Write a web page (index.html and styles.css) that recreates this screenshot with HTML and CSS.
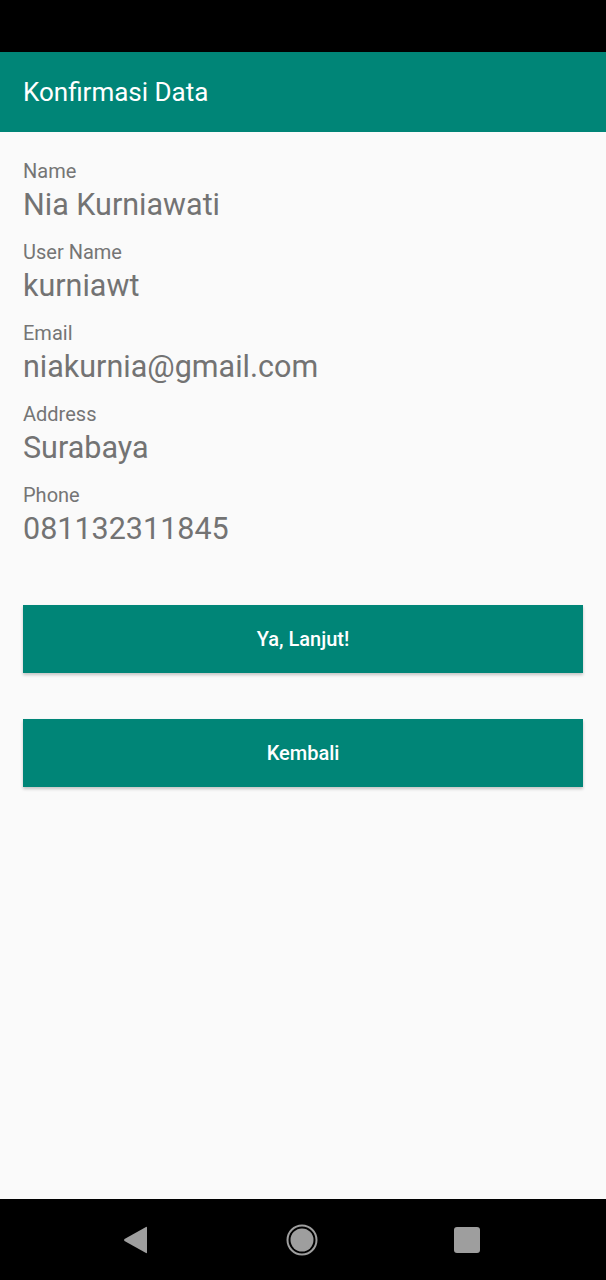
FILE: index.html
```html
<!DOCTYPE html>
<html>
<head>
<meta charset="utf-8">
<link rel="stylesheet" href="styles.css">
</head>
<body>
<div class="screen">
  <div class="status-bar"></div>
  <header class="app-bar"><h1 class="title">Konfirmasi Data</h1></header>
  <main class="content">
    <div class="field"><div class="label">Name</div><div class="value">Nia Kurniawati</div></div>
    <div class="field"><div class="label">User Name</div><div class="value">kurniawt</div></div>
    <div class="field"><div class="label">Email</div><div class="value">niakurnia@gmail.com</div></div>
    <div class="field"><div class="label">Address</div><div class="value">Surabaya</div></div>
    <div class="field"><div class="label">Phone</div><div class="value">081132311845</div></div>
    <div class="buttons">
      <button class="btn">Ya, Lanjut!</button>
      <button class="btn">Kembali</button>
    </div>
  </main>
  <nav class="nav-bar">
    <svg class="nav-icon" width="26" height="28" viewBox="0 0 26 28"><path d="M24 1.5 L24 26.5 Q24 27.5 23 27 L1.5 15 Q0.5 14 1.5 13 L23 1 Q24 0.5 24 1.5 Z" fill="#9e9e9e"/></svg>
    <svg class="nav-icon" width="32" height="32" viewBox="0 0 32 32"><circle cx="16" cy="16" r="14.5" fill="none" stroke="#9e9e9e" stroke-width="2"/><circle cx="16" cy="16" r="11.5" fill="#9e9e9e"/></svg>
    <svg class="nav-icon" width="26" height="26" viewBox="0 0 26 26"><rect x="0" y="0" width="26" height="26" rx="3" fill="#9e9e9e"/></svg>
  </nav>
</div>
</body>
</html>
```
FILE: styles.css
```css
* { box-sizing: border-box; }
html, body { margin: 0; padding: 0; }
body { font-family: Roboto, "Liberation Sans", sans-serif; background: #fafafa; }
.screen { width: 606px; height: 1280px; display: flex; flex-direction: column; }
.status-bar { height: 52px; background: #000; flex: none; }
.app-bar { height: 80px; background: #008577; flex: none; display: flex; align-items: center; padding: 0 23px; }
.title { margin: 0; font-size: 26px; font-weight: 400; color: #fff; }
.content { flex: 1; background: #fafafa; padding: 27px 23px 0; }
.field { display: flex; flex-direction: column; margin-bottom: 13px; }
.label { font-size: 20px; line-height: 24px; color: #757575; }
.value { font-size: 30.5px; line-height: 44px; color: #737373; }
.buttons { display: flex; flex-direction: column; gap: 46px; margin-top: 54px; }
.btn { height: 68px; border: none; background: #008577; color: #fff; font-family: Roboto, sans-serif; font-weight: 500; font-size: 20px; box-shadow: 0 2px 3px rgba(0,0,0,0.22); padding: 0; }
.nav-bar { height: 81px; background: #000; flex: none; display: flex; align-items: center; justify-content: space-between; padding: 0 126px 0 123px; }
```
